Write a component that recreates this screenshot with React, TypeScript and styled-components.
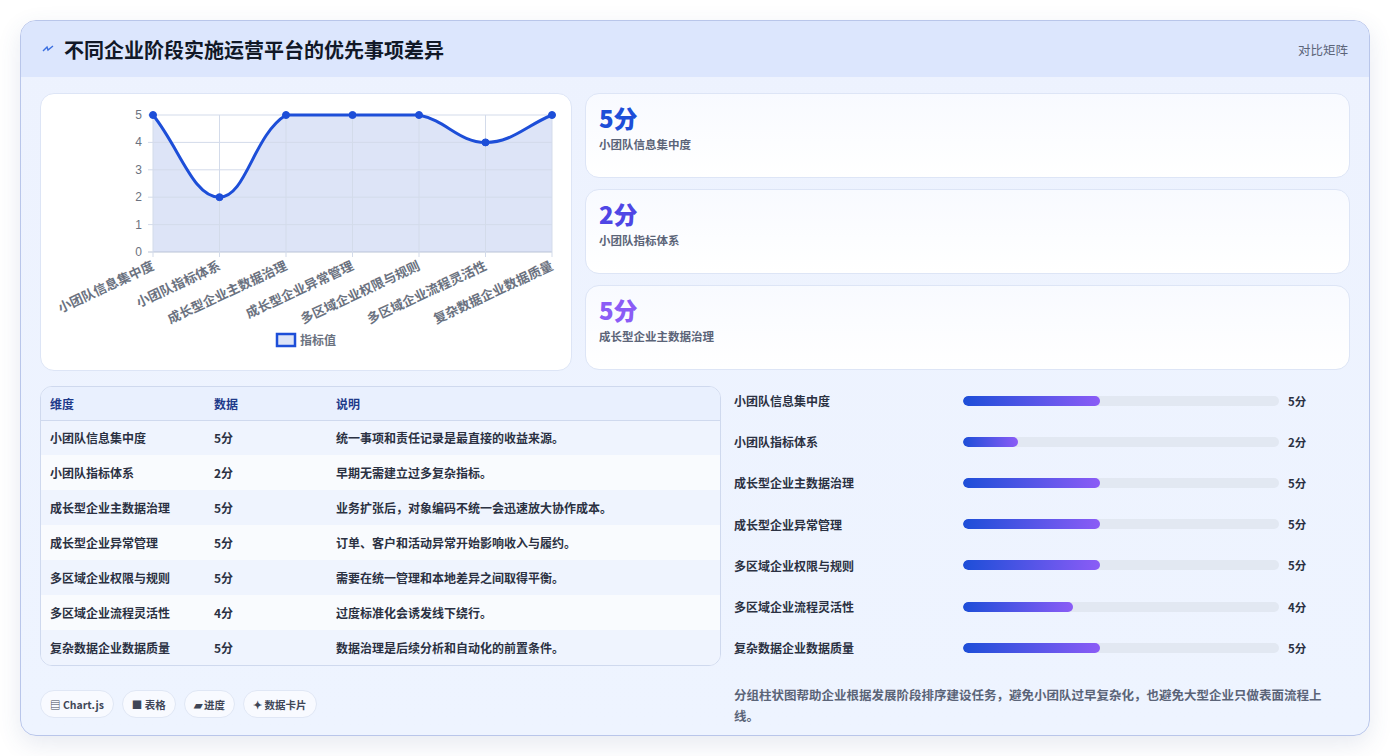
import React from "react";
import styled, { createGlobalStyle } from "styled-components";

const G = createGlobalStyle`
  html,body{margin:0;padding:0;background:#fff;}
  body{font-family:"Noto Sans CJK SC","Noto Sans",sans-serif;}
  *{box-sizing:border-box;}
`;

const rows = [
  { name: "小团队信息集中度", v: 5, d: "统一事项和责任记录是最直接的收益来源。" },
  { name: "小团队指标体系", v: 2, d: "早期无需建立过多复杂指标。" },
  { name: "成长型企业主数据治理", v: 5, d: "业务扩张后，对象编码不统一会迅速放大协作成本。" },
  { name: "成长型企业异常管理", v: 5, d: "订单、客户和活动异常开始影响收入与履约。" },
  { name: "多区域企业权限与规则", v: 5, d: "需要在统一管理和本地差异之间取得平衡。" },
  { name: "多区域企业流程灵活性", v: 4, d: "过度标准化会诱发线下绕行。" },
  { name: "复杂数据企业数据质量", v: 5, d: "数据治理是后续分析和自动化的前置条件。" },
];

const Page = styled.div`
  padding: 20px;
  width: 1390px;
  height: 756px;
`;
const Shell = styled.div`
  width: 1350px;
  height: 716px;
  border: 1px solid #b9c6ea;
  border-radius: 16px;
  background: linear-gradient(180deg, #edf2fe 0%, #eef4ff 100%);
  box-shadow: 0 8px 24px rgba(60, 80, 140, 0.12);
  overflow: hidden;
  display: flex;
  flex-direction: column;
`;
const Header = styled.div`
  height: 56px;
  background: #dce6fd;
  display: flex;
  align-items: center;
  justify-content: space-between;
  padding: 0 21px;
`;
const Title = styled.h1`
  margin: 0;
  font-size: 20px;
  font-weight: 700;
  color: #111827;
  display: flex;
  align-items: center;
  gap: 10px;
`;
const Tag = styled.span`
  font-size: 12.5px;
  color: #5b6478;
`;
const Body = styled.div`
  padding: 16px 19px 0 19px;
  display: flex;
  flex-direction: column;
  gap: 15px;
`;
const Top = styled.div`
  display: grid;
  grid-template-columns: 532px 1fr;
  gap: 13px;
  height: 278px;
`;
const Panel = styled.div`
  background: #fff;
  border: 1px solid #dde5f6;
  border-radius: 14px;
  overflow: hidden;
`;
const Cards = styled.div`
  display: flex;
  flex-direction: column;
  gap: 11px;
`;
const Card = styled.div`
  height: 85px;
  background: linear-gradient(180deg, #f8faff, #ffffff);
  border: 1px solid #dde5f6;
  border-radius: 14px;
  padding: 10px 13px;
`;
const Big = styled.div<{ c: string }>`
  font-size: 24px;
  font-weight: 800;
  color: ${(p) => p.c};
  line-height: 26px;
  margin-top: 1px;
`;
const Small = styled.div`
  font-size: 11.5px;
  font-weight: 600;
  color: #5b6478;
  margin-top: 5px;
`;
const Bottom = styled.div`
  display: grid;
  grid-template-columns: 681px 1fr;
  gap: 13px;
`;
const TableWrap = styled.div`
  border: 1px solid #cfd9ee;
  border-radius: 12px;
  overflow: hidden;
  background: #f6f9ff;
`;
const Table = styled.table`
  width: 100%;
  border-collapse: collapse;
  font-size: 12px;
  font-weight: 600;
  color: #2b3142;
`;
const Th = styled.th<{ w?: number }>`
  text-align: left;
  font-weight: 600;
  color: #1e3a8a;
  background: #e9f0fe;
  height: 33px;
  padding: 0 9px;
  width: ${(p) => (p.w ? `${p.w}px` : "auto")};
  border-bottom: 1px solid #cfd9ee;
`;
const Tr = styled.tr<{ odd: boolean }>`
  background: ${(p) => (p.odd ? "#f9fbfe" : "#eff4fe")};
  & + & td { border-top: 1px solid #dfe7f6; }
`;
const Td = styled.td`
  height: 35px;
  padding: 0 9px;
`;
const Chips = styled.div`
  display: flex;
  gap: 8px;
  margin-top: 24px;
`;
const Chip = styled.div`
  height: 28px;
  border-radius: 14px;
  background: #f8faff;
  border: 1px solid #e0e7f5;
  padding: 0 9px;
  display: flex;
  align-items: center;
  font-size: 10.5px;
  font-weight: 600;
  color: #3f4657;
  gap: 3px;
`;
const Bars = styled.div`
  display: flex;
  flex-direction: column;
  margin-top: -6px;
`;
const BarRow = styled.div`
  display: grid;
  grid-template-columns: 229px 316px 40px;
  align-items: center;
  height: 41.2px;
  font-size: 12px;
  font-weight: 600;
  color: #2b3142;
`;
const Track = styled.div`
  height: 10px;
  border-radius: 5px;
  background: #e2e8f2;
  overflow: hidden;
`;
const Fill = styled.div`
  height: 100%;
  border-radius: 5px;
  background: linear-gradient(90deg, #1d4ed8, #8b5cf6);
`;
const Val = styled.span`
  padding-left: 9px;
  font-size: 11.5px;
`;
const Note = styled.p`
  margin: 16px 0 0;
  padding-right: 4px;
  font-size: 12.5px;
  line-height: 21px;
  color: #5b6478;
  font-weight: 600;
`;

function Chart() {
  const x0 = 112, step = 66.5, yb = 158, ys = 27.4;
  const pts = rows.map((r, i) => [x0 + i * step, yb - r.v * ys]);
  const t = 0.4;
  let d = `M${pts[0][0]},${pts[0][1]}`;
  const cps: number[][][] = pts.map((p, i) => {
    const pr = pts[i - 1] || p, nx = pts[i + 1] || p;
    const d01 = Math.hypot(p[0] - pr[0], p[1] - pr[1]);
    const d12 = Math.hypot(nx[0] - p[0], nx[1] - p[1]);
    const s = d01 + d12 || 1;
    const fa = (t * d01) / s, fb = (t * d12) / s;
    return [
      [p[0] - fa * (nx[0] - pr[0]), Math.min(yb, p[1] - fa * (nx[1] - pr[1]))],
      [p[0] + fb * (nx[0] - pr[0]), Math.min(yb, p[1] + fb * (nx[1] - pr[1]))],
    ];
  });
  for (let i = 1; i < pts.length; i++) {
    const a = cps[i - 1][1], b = cps[i][0];
    d += ` C${a[0]},${Math.max(a[1], 21)} ${b[0]},${Math.max(b[1], 21)} ${pts[i][0]},${pts[i][1]}`;
  }
  const area = d + ` L${pts[6][0]},${yb} L${x0},${yb} Z`;
  return (
    <svg width="532" height="278" style={{ display: "block" }}>
      <path d={area} fill="#dde4f7" />
      {[0, 1, 2, 3, 4, 5].map((v) => (
        <g key={v}>
          <line x1={x0 - 5} x2={x0 + 6 * step} y1={yb - v * ys} y2={yb - v * ys} stroke={v === 0 ? "#b9c3d6" : "#d3dbea"} />
          <text x={x0 - 11} y={yb - v * ys + 4} fontSize="12" fill="#6b7280" textAnchor="end" fontFamily="Liberation Sans, sans-serif">{v}</text>
        </g>
      ))}
      {pts.map((p, i) => (
        <line key={i} x1={p[0]} x2={p[0]} y1={yb - 5 * ys} y2={yb + 5} stroke="#d3dbea" />
      ))}
      <path d={d} fill="none" stroke="#1d4ed8" strokeWidth="3" />
      {pts.map((p, i) => (
        <circle key={i} cx={p[0]} cy={p[1]} r="3.5" fill="#1d4ed8" stroke="#1d4ed8" />
      ))}
      {rows.map((r, i) => (
        <text key={i} transform={`translate(${pts[i][0] + 2},${yb + 17}) rotate(-25)`} textAnchor="end" fontSize="13" fontWeight="700" fill="#6b7280" fontFamily="Noto Sans CJK SC, sans-serif">{r.name}</text>
      ))}
      <rect x="236" y="240" width="18" height="12" fill="#dde4f7" stroke="#1d4ed8" strokeWidth="2.5" />
      <text x="259" y="250.5" fontSize="12" fill="#6b7280" fontWeight="600" fontFamily="Noto Sans CJK SC, sans-serif">指标值</text>
    </svg>
  );
}

export default function App() {
  return (
    <Page>
      <G />
      <Shell>
        <Header>
          <Title>
            <svg width="12" height="10" viewBox="0 0 12 10"><path d="M1 7 L5 3 L6 6 L11 2" stroke="#3b6fe0" strokeWidth="1.4" fill="none" /></svg>
            不同企业阶段实施运营平台的优先事项差异
          </Title>
          <Tag>对比矩阵</Tag>
        </Header>
        <Body>
          <Top>
            <Panel><Chart /></Panel>
            <Cards>
              <Card><Big c="#1d4ed8">5分</Big><Small>小团队信息集中度</Small></Card>
              <Card><Big c="#4f46e5">2分</Big><Small>小团队指标体系</Small></Card>
              <Card><Big c="#8b5cf6">5分</Big><Small>成长型企业主数据治理</Small></Card>
            </Cards>
          </Top>
          <Bottom>
            <div>
              <TableWrap>
                <Table>
                  <thead>
                    <tr><Th w={164}>维度</Th><Th w={122}>数据</Th><Th>说明</Th></tr>
                  </thead>
                  <tbody>
                    {rows.map((r, i) => (
                      <Tr key={i} odd={i % 2 === 1}><Td>{r.name}</Td><Td>{r.v}分</Td><Td>{r.d}</Td></Tr>
                    ))}
                  </tbody>
                </Table>
              </TableWrap>
              <Chips>
                <Chip>▤ Chart.js</Chip>
                <Chip>■ 表格</Chip>
                <Chip>▰ 进度</Chip>
                <Chip>✦ 数据卡片</Chip>
              </Chips>
            </div>
            <div>
              <Bars>
                {rows.map((r, i) => (
                  <BarRow key={i}>
                    <span>{r.name}</span>
                    <Track><Fill style={{ width: `${(r.v / 11.5) * 100}%` }} /></Track>
                    <Val>{r.v}分</Val>
                  </BarRow>
                ))}
              </Bars>
              <Note>分组柱状图帮助企业根据发展阶段排序建设任务，避免小团队过早复杂化，也避免大型企业只做表面流程上线。</Note>
            </div>
          </Bottom>
        </Body>
      </Shell>
    </Page>
  );
}
